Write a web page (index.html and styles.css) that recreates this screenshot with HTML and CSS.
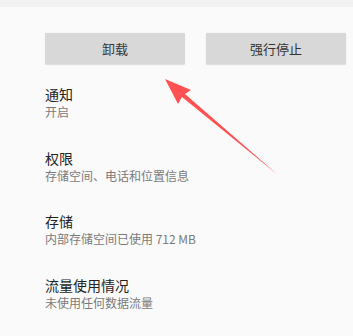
FILE: index.html
```html
<!DOCTYPE html>
<html>
<head>
<meta charset="utf-8">
<link rel="stylesheet" href="styles.css">
</head>
<body>
<div class="topband"></div>
<div class="content">
  <div class="buttons">
    <div class="btn">卸载</div>
    <div class="btn">强行停止</div>
  </div>
  <div class="list">
    <div class="item"><div class="title">通知</div><div class="sub">开启</div></div>
    <div class="item"><div class="title">权限</div><div class="sub">存储空间、电话和位置信息</div></div>
    <div class="item"><div class="title">存储</div><div class="sub">内部存储空间已使用 712 MB</div></div>
    <div class="item"><div class="title">流量使用情况</div><div class="sub">未使用任何数据流量</div></div>
  </div>
</div>
<svg class="arrow" width="353" height="336" viewBox="0 0 353 336">
  <polygon points="165,79 191,90 185,94 278,175 182,97 178,104" fill="#ff5151"/>
</svg>
</body>
</html>
```
FILE: styles.css
```css
html, body {
  margin: 0;
  padding: 0;
  background: #fafafa;
  font-family: "Noto Sans CJK SC", "Noto Sans", sans-serif;
  width: 353px;
  height: 336px;
  overflow: hidden;
  position: relative;
}
.topband {
  height: 7px;
  background: #f2f2f2;
}
.content {
  padding: 0 7px 0 45px;
}
.buttons {
  display: flex;
  gap: 21px;
  margin-top: 26px;
}
.btn {
  width: 140px;
  height: 31px;
  background: #d7d8d7;
  border-radius: 1px;
  box-shadow: 0 0.5px 1px rgba(0,0,0,0.12);
  display: flex;
  align-items: center;
  justify-content: center;
  font-size: 13px;
  color: #333;
}
.list {
  margin-top: 20px;
}
.item {
  height: 63.7px;
}
.title {
  font-size: 14px;
  line-height: 20px;
  color: #222;
}
.sub {
  font-size: 12px;
  line-height: 16px;
  color: #7a7a7a;
}
.arrow {
  position: absolute;
  left: 0;
  top: 0;
}
```
